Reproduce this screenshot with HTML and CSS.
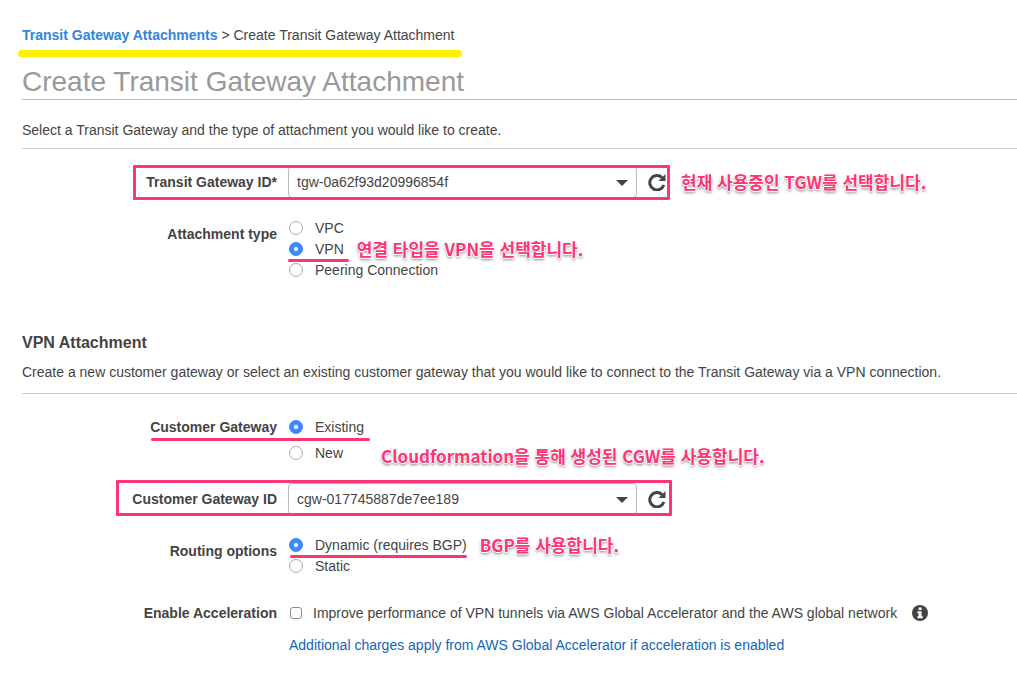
FILE: index.html
```html
<!DOCTYPE html>
<html lang="en">
<head>
<meta charset="utf-8">
<title>Create Transit Gateway Attachment</title>
<link rel="stylesheet" href="styles.css">
</head>
<body>
<main class="page">
  <nav class="breadcrumb"><a href="#">Transit Gateway Attachments</a> &gt; Create Transit Gateway Attachment<span class="marker"></span></nav>
  <h1 class="title">Create Transit Gateway Attachment</h1>
  <p class="intro">Select a Transit Gateway and the type of attachment you would like to create.</p>

  <form>
    <div class="row row-select">
      <label class="name" for="tgw">Transit Gateway ID*</label>
      <div class="field">
        <div class="picker">
          <select id="tgw"><option>tgw-0a62f93d20996854f</option></select>
          <svg class="caret" viewBox="0 0 12 6"><path d="M0 0h12L6 6z"/></svg>
        </div>
        <button class="refresh" type="button" aria-label="Refresh transit gateways">
          <svg viewBox="0 0 18 18"><path class="arc" d="M14 4.600A7.200 7.200 0 1 0 15.800 12"/><path d="M17.500 1v7h-7z"/></svg>
        </button>
        <span class="note note-tgw" lang="ko">현재 사용중인 TGW를 선택합니다.</span>
      </div>
      <span class="box"></span>
    </div>

    <div class="row row-type" role="radiogroup" aria-labelledby="type-name">
      <span class="name name-group" id="type-name">Attachment type</span>
      <div class="options">
        <label class="option"><input type="radio" name="type">VPC</label>
        <div class="line">
          <label class="option"><input type="radio" name="type" checked>VPN<span class="underline underline-vpn"></span></label>
          <span class="note" lang="ko">연결 타입을 VPN을 선택합니다.</span>
        </div>
        <label class="option"><input type="radio" name="type">Peering Connection</label>
      </div>
    </div>

    <h2 class="section">VPN Attachment</h2>
    <p class="intro intro-vpn">Create a new customer gateway or select an existing customer gateway that you would like to connect to the Transit Gateway via a VPN connection.</p>

    <div class="row row-gateway" role="radiogroup" aria-labelledby="gateway-name">
      <span class="name" id="gateway-name">Customer Gateway</span>
      <div class="options options-loose">
        <label class="option"><input type="radio" name="gateway" checked>Existing<span class="underline underline-existing"></span></label>
        <div class="line">
          <label class="option"><input type="radio" name="gateway">New</label>
          <span class="note note-cgw" lang="ko">Cloudformation을 통해 생성된 CGW를 사용합니다.</span>
        </div>
      </div>
    </div>

    <div class="row row-select row-cgw">
      <label class="name" for="cgw">Customer Gateway ID</label>
      <div class="field">
        <div class="picker">
          <select id="cgw"><option>cgw-017745887de7ee189</option></select>
          <svg class="caret" viewBox="0 0 12 6"><path d="M0 0h12L6 6z"/></svg>
        </div>
        <button class="refresh" type="button" aria-label="Refresh customer gateways">
          <svg viewBox="0 0 18 18"><path class="arc" d="M14 4.600A7.200 7.200 0 1 0 15.800 12"/><path d="M17.500 1v7h-7z"/></svg>
        </button>
      </div>
      <span class="box box-cgw"></span>
    </div>

    <div class="row row-routing" role="radiogroup" aria-labelledby="routing-name">
      <span class="name name-group" id="routing-name">Routing options</span>
      <div class="options">
        <div class="line">
          <label class="option"><input type="radio" name="routing" checked>Dynamic (requires BGP)<span class="underline underline-bgp"></span></label>
          <span class="note" lang="ko">BGP를 사용합니다.</span>
        </div>
        <label class="option"><input type="radio" name="routing">Static</label>
      </div>
    </div>

    <div class="row row-accel">
      <label class="name" for="accel">Enable Acceleration</label>
      <div class="accel">
        <div class="line">
          <label class="option option-check"><input type="checkbox" id="accel">Improve performance of VPN tunnels via AWS Global Accelerator and the AWS global network</label>
          <svg class="info" viewBox="0 0 16 16"><circle cx="8" cy="8" r="8"/><path d="M6.600 2.500h3v2.500h-3zM5.500 6.300h4.100v4.900h1.200v2H5.400v-2h1.200V8.200H5.500z"/></svg>
        </div>
        <a class="charges" href="#">Additional charges apply from AWS Global Accelerator if acceleration is enabled</a>
      </div>
    </div>
  </form>
</main>
</body>
</html>
```
FILE: styles.css
```css
* { box-sizing: border-box; }

body {
  margin: 0;
  background: #fff;
  color: #444;
  font: 14px/20px "Liberation Sans", Arial, sans-serif;
}

.page { padding: 25px 0 24px 22px; }

a { color: #1166bb; text-decoration: none; }

.breadcrumb { position: relative; width: fit-content; }
.breadcrumb a { color: #2e86de; font-weight: bold; }

.marker {
  position: absolute;
  left: -4px;
  right: -7px;
  top: 25px;
  height: 7px;
  border-radius: 4px;
  background: #fff200;
}

.title {
  margin: 20px 0 0;
  border-bottom: 1px solid #bbb;
  color: #999;
  font-size: 28px;
  font-weight: normal;
  line-height: 34px;
}

.intro {
  margin: 0;
  padding: 20px 0 8px;
  border-bottom: 1px solid #ccc;
  white-space: nowrap;
}

.section { margin: 53px 0 0; font-size: 16px; line-height: 20px; }
.intro-vpn { padding: 9px 0 11px; }

.row {
  position: relative;
  display: grid;
  grid-template-columns: 255px 1fr;
  column-gap: 11px;
}

.name { text-align: right; font-weight: bold; }
.name-group { padding-top: 6px; }

.row-select { align-items: center; margin-top: 17px; }
.row-type { margin-top: 20px; }
.row-gateway { margin-top: 23px; }
.row-cgw { margin-top: 20px; }
.row-routing { margin-top: 20px; }
.row-accel { margin-top: 27px; }

.field { display: flex; align-items: center; }
.picker { position: relative; width: 349px; }

.picker select {
  display: block;
  width: 100%;
  height: 32px;
  padding: 0 32px 0 8px;
  border: 1px solid #bbb;
  border-radius: 4px;
  background: #fff;
  color: #444;
  font: inherit;
  appearance: none;
}

.caret {
  position: absolute;
  right: 9px;
  top: 14px;
  width: 12px;
  height: 6px;
  fill: #444;
}

.refresh {
  width: 18px;
  height: 18px;
  margin-left: 11px;
  padding: 0;
  border: 0;
  background: none;
}
.refresh svg { display: block; fill: #444; }
.refresh .arc { fill: none; stroke: #444; stroke-width: 3; }

.box {
  position: absolute;
  left: 111px;
  top: -1px;
  width: 537px;
  height: 35px;
  border: 3px solid #fc3574;
  border-radius: 1px;
  pointer-events: none;
}
.box-cgw { left: 94px; top: -3px; width: 556px; height: 36px; }

.options { display: grid; row-gap: 1px; justify-items: start; }
.options-loose { row-gap: 6px; }
.line { display: flex; align-items: center; }

.option {
  position: relative;
  display: flex;
  align-items: center;
  gap: 12px;
  padding-left: 1px;
}

.option input {
  appearance: none;
  width: 14px;
  height: 14px;
  margin: 0;
  border: 1px solid #aaa;
  border-radius: 50%;
  background: #fff;
}
.option input:checked {
  border-color: #3b88fd;
  background: radial-gradient(circle, #fff 1px, #3b88fd 3px);
}

.option-check { gap: 11px; padding-left: 2px; }
.option-check input { width: 12px; height: 12px; border-color: #888; border-radius: 3px; }

.underline {
  position: absolute;
  top: 20px;
  height: 3px;
  border-radius: 2px;
  background: #fc3574;
}
.underline-vpn { left: 0; right: -5px; }
.underline-existing { left: -137px; right: -6px; top: 21px; }
.underline-bgp { left: 2px; right: 0; }

.note {
  height: 20px;
  margin-left: 13px;
  color: #fc3574;
  font: bold 17px/20px "Noto Sans CJK KR", sans-serif;
  white-space: nowrap;
  text-shadow: 1px 0 #fff, -1px 0 #fff, 0 1px #fff, 0 -1px #fff, 0 2px 3px #777;
}
.note-tgw { margin-left: 15px; }
.note-cgw { margin: 3px 0 -3px 38px; }

.accel { display: grid; row-gap: 12px; justify-items: start; }
.info { width: 16px; height: 16px; margin-left: 15px; fill: #444; }
.info path { fill: #fff; }
.charges { margin-left: 1px; }
```
